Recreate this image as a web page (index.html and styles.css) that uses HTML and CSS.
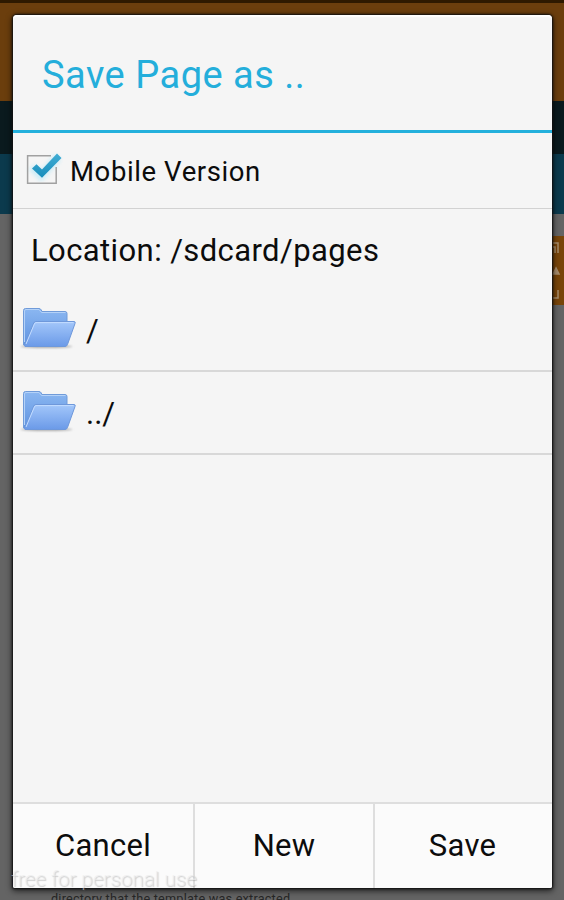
FILE: index.html
```html
<!DOCTYPE html>
<html lang="en">
<head>
<meta charset="utf-8">
<title>Save Page</title>
<link rel="stylesheet" href="styles.css">
</head>
<body>
<div class="page">
  <div class="band status"></div>
  <div class="band header"></div>
  <div class="band nav"></div>
  <div class="band hero"></div>
  <div class="band content">
    <div class="share">
      <svg width="12" height="69" viewBox="0 0 12 69" fill="none" stroke="#a88d6c" stroke-width="1.5"><path d="M1 7H6V17M1 11H3V17"/><path d="M1 38L4 32L7 38Z" fill="#a88d6c"/><path d="M6 54V62H1"/></svg>
    </div>
    <p class="page-text">directory that the template was extracted</p>
  </div>
</div>
<main class="dialog">
  <h1 class="title"><span>Save Page as ..</span></h1>
  <label class="option">
    <svg class="check" width="38" height="38" viewBox="0 0 38 38">
      <defs>
        <linearGradient id="tick" x1="0" y1="0" x2="0" y2="1"><stop offset="0" stop-color="#42add4"/><stop offset="1" stop-color="#168dbb"/></linearGradient>
        <filter id="glow" x="-30%" y="-30%" width="160%" height="160%"><feGaussianBlur stdDeviation="2"/></filter>
      </defs>
      <path d="M7 17L16 26L33 7" fill="none" stroke="#b9e8f7" stroke-width="8" opacity=".75" filter="url(#glow)"/>
      <path d="M26 5.700H2.600V33.200H31.200V17" fill="none" stroke="#a1a1a1" stroke-width="1.500"/>
      <path d="M7 18.500L11.500 14.200L17 19.500L32 3.500L36.500 8L17 27.800Z" fill="url(#tick)"/>
    </svg>
    <span class="option-text">Mobile Version</span>
  </label>
  <div class="location"><span>Location: /sdcard/pages</span></div>
  <div class="folder-row">
    <svg class="folder" width="58" height="46" viewBox="0 0 58 46">
      <defs>
        <linearGradient id="back" x1="0" y1="0" x2="0" y2="1"><stop offset="0" stop-color="#8bb7f1"/><stop offset="1" stop-color="#5f93e0"/></linearGradient>
        <linearGradient id="front" x1="0" y1="0" x2="0" y2="1"><stop offset="0" stop-color="#a3c7fa"/><stop offset="1" stop-color="#6b9ae8"/></linearGradient>
        <filter id="soft" x="-20%" y="-100%" width="140%" height="300%"><feGaussianBlur stdDeviation="1"/></filter>
      </defs>
      <ellipse cx="27.500" cy="40.500" rx="26" ry="1.500" fill="#aaa" filter="url(#soft)"/>
      <path d="M4.500 39V4.500Q4.500 2.500 6.500 2.500H20Q21.500 2.500 22.300 4L23 5.500H46Q48 5.500 48 7.500V17L9 40Z" fill="url(#back)" stroke="#709bd9"/>
      <path d="M5.500 36V5Q5.500 3.500 7 3.500H20L22.500 6.500H46.500" fill="none" stroke="#b4d2f8"/>
      <path d="M5.500 39.500L14.300 18Q15 15.500 17 15.500H55Q56.800 15.500 56 17.500L48.500 38.500Q47.800 40.500 46 40.500H6Z" fill="url(#front)" stroke="#6e98db"/>
      <path d="M7 38L15.400 18Q16 16.600 17 16.600H54.500" fill="none" stroke="#c3dcff"/>
    </svg>
    <span class="folder-name">/</span>
  </div>
  <div class="folder-row">
    <svg class="folder" width="58" height="46" viewBox="0 0 58 46">
      <ellipse cx="27.500" cy="40.500" rx="26" ry="1.500" fill="#aaa" filter="url(#soft)"/>
      <path d="M4.500 39V4.500Q4.500 2.500 6.500 2.500H20Q21.500 2.500 22.300 4L23 5.500H46Q48 5.500 48 7.500V17L9 40Z" fill="url(#back)" stroke="#709bd9"/>
      <path d="M5.500 36V5Q5.500 3.500 7 3.500H20L22.500 6.500H46.500" fill="none" stroke="#b4d2f8"/>
      <path d="M5.500 39.500L14.300 18Q15 15.500 17 15.500H55Q56.800 15.500 56 17.500L48.500 38.500Q47.800 40.500 46 40.500H6Z" fill="url(#front)" stroke="#6e98db"/>
      <path d="M7 38L15.400 18Q16 16.600 17 16.600H54.500" fill="none" stroke="#c3dcff"/>
    </svg>
    <span class="folder-name">../</span>
  </div>
  <div class="spacer"></div>
  <div class="actions">
    <button class="action">Cancel</button>
    <button class="action">New</button>
    <button class="action">Save</button>
  </div>
</main>
<div class="watermark">free for personal use</div>
</body>
</html>
```
FILE: styles.css
```css
* { box-sizing: border-box; }
body {
  margin: 0;
  width: 564px;
  height: 900px;
  position: relative;
  overflow: hidden;
  font-family: Roboto, sans-serif;
  color: #0c0c0c;
}
.page {
  position: absolute;
  inset: 0;
  display: flex;
  flex-direction: column;
  background: #646464;
}
.status { height: 3px; background: #2e1900; }
.header { height: 98px; background: #6b3e0d; }
.nav { height: 53px; background: #0a1a1e; }
.hero { height: 60px; background: #0b3a4d; }
.content {
  flex: 1;
  display: flex;
  flex-direction: column;
  justify-content: space-between;
  padding-top: 22px;
}
.share { align-self: flex-end; width: 12px; height: 69px; background: #794509; }
.share svg { display: block; }
.page-text {
  margin: 0 0 -6px 51px;
  font-size: 12.7px;
  line-height: 14px;
  letter-spacing: .2px;
  color: #272727;
  white-space: nowrap;
}
.dialog {
  position: absolute;
  left: 13px;
  top: 15px;
  width: 539px;
  height: 873px;
  display: flex;
  flex-direction: column;
  background: #f5f5f5;
  border-radius: 4px 4px 2px 2px;
  box-shadow: 0 0 2px 1px #111, 0 2px 6px 1px rgba(0, 0, 0, .65), inset 0 2px 1px #fff;
}
.title {
  margin: 0;
  height: 118px;
  padding: 37px 0 0 29px;
  border-bottom: 3px solid #24b0dc;
  font-size: 38px;
  line-height: 46px;
  font-weight: 400;
  letter-spacing: .5px;
  color: #24aedb;
}
.option {
  height: 76px;
  display: flex;
  align-items: center;
  padding-left: 12px;
  border-bottom: 1px solid #d2d2d2;
}
.check { margin-top: -4px; }
.option-text { margin: 2px 0 0 7px; font-size: 27.5px; letter-spacing: .6px; }
.location {
  height: 80px;
  padding: 23px 0 0 18px;
  font-size: 31px;
  line-height: 38px;
  letter-spacing: .4px;
}
.folder-row {
  height: 83px;
  display: flex;
  align-items: center;
  padding-left: 6px;
  border-bottom: 2px solid #d8d8d8;
}
.folder-row:first-of-type { border-color: #d8d8d8; }
.folder { margin-top: -2px; }
.folder-name { margin: 1px 0 0 9px; font-size: 31px; }
.spacer { flex: 1; }
.actions {
  height: 86px;
  display: grid;
  grid-template-columns: 182px 180px 1fr;
  border-top: 2px solid #dedede;
  background: #fbfbfb;
  border-radius: 0 0 2px 2px;
}
.action {
  border: 0;
  border-right: 2px solid #dedede;
  padding: 0;
  background: transparent;
  font: 400 31px/36px Roboto, sans-serif;
  letter-spacing: .3px;
  color: #0c0c0c;
}
.action:last-child { border-right: 0; padding-right: 2px; }
.watermark {
  position: absolute;
  left: 11px;
  top: 866px;
  font-size: 20.6px;
  line-height: 26px;
  font-weight: 300;
  color: rgba(235, 235, 235, .55);
  text-shadow: 1px 1px 1px rgba(100, 100, 100, .3);
  white-space: nowrap;
}
```
